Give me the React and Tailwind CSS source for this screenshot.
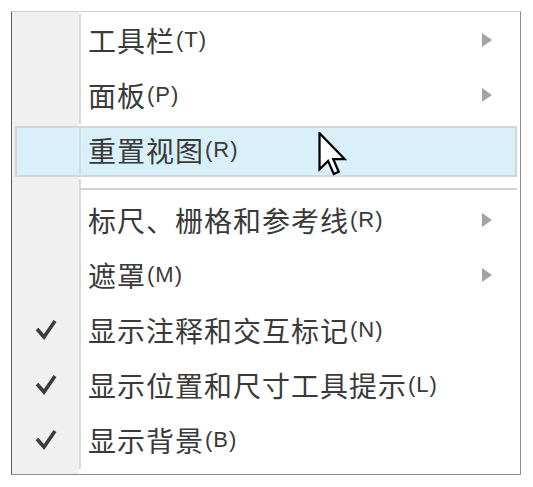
import React from 'react';

const items = [
  { label: '工具栏', key: 'T', sub: true },
  { label: '面板', key: 'P', sub: true },
  { label: '重置视图', key: 'R', active: true },
  { sep: true },
  { label: '标尺、栅格和参考线', key: 'R', sub: true },
  { label: '遮罩', key: 'M', sub: true },
  { label: '显示注释和交互标记', key: 'N', checked: true },
  { label: '显示位置和尺寸工具提示', key: 'L', checked: true },
  { label: '显示背景', key: 'B', checked: true },
];

function Check() {
  return (
    <svg width="24" height="24" viewBox="0 0 24 24">
      <polyline points="3,11 10,19 21,3" fill="none" stroke="#3c3c3c" strokeWidth="3.6" strokeLinejoin="miter" />
    </svg>
  );
}

function SubArrow() {
  return (
    <svg width="12" height="16" viewBox="0 0 12 16">
      <polygon points="1,1 11,8 1,15" fill="#a3a3a3" />
    </svg>
  );
}

function Cursor() {
  return (
    <svg width="29" height="44" viewBox="0 0 12.5 19.5" className="absolute left-[318px] top-[132px]">
      <path d="M0.5,0.5 L0.5,16.5 L4.3,12.8 L6.8,18.6 L9,17.6 L6.6,12 L11.6,12 Z" fill="white" stroke="black" strokeWidth="1" strokeLinejoin="miter" />
    </svg>
  );
}

function Label({ label, k }) {
  return (
    <span className="inline-flex items-center whitespace-nowrap text-[#3a3a3a]">
      <span className="text-[28px] leading-none tracking-[1px] [font-family:'Noto_Sans_CJK_SC',sans-serif]">{label}</span>
      <span className="text-[22px] leading-none tracking-[1px] pl-[1px] [font-family:'Liberation_Sans',sans-serif]">({k})</span>
    </span>
  );
}

export default function App() {
  return (
    <div className="relative w-[533px] h-[487px] bg-white">
      <div className="absolute left-[11px] top-[11px] w-[510px] h-[464px] border border-[#8c8c8c] border-l-[#5e5e5e] border-t-[#d0d0d0] bg-[linear-gradient(to_right,#f0f0f0_67px,#ffffff_67px)] pt-[2px]">
        {items.map((it, i) => {
          if (it.sep) {
            return (
              <div key={i} className="flex h-[15px]">
                <div className="w-[67px]" />
                <div className="w-[2px] bg-[#dadada]" />
                <div className="flex-1 pt-[9px] pr-[3px]">
                  <div className="h-[2px] bg-[#d4d4d4]" />
                </div>
              </div>
            );
          }
          if (it.active) {
            return (
              <div key={i} className="h-[55px] py-[2px] pl-[3px] pr-[3px] flex">
                <div className="flex-1 flex border-2 border-[#d3d5d7] bg-[#d9eff9]">
                  <div className="w-[62px]" />
                  <div className="w-[2px] bg-[#cfdde4]" />
                  <div className="flex-1 flex items-center pl-[7px] pb-[3px]">
                    <Label label={it.label} k={it.key} />
                  </div>
                </div>
              </div>
            );
          }
          return (
            <div key={i} className="flex h-[55px]">
              <div className="w-[67px] flex items-center justify-center pl-[1px] pb-[4px]">
                {it.checked && <Check />}
              </div>
              <div className="w-[2px] bg-[#dadada]" />
              <div className="flex-1 flex items-center justify-between pl-[7px] pr-[27px] pb-[3px]">
                <Label label={it.label} k={it.key} />
                {it.sub && <SubArrow />}
              </div>
            </div>
          );
        })}
      </div>
      <Cursor />
    </div>
  );
}
